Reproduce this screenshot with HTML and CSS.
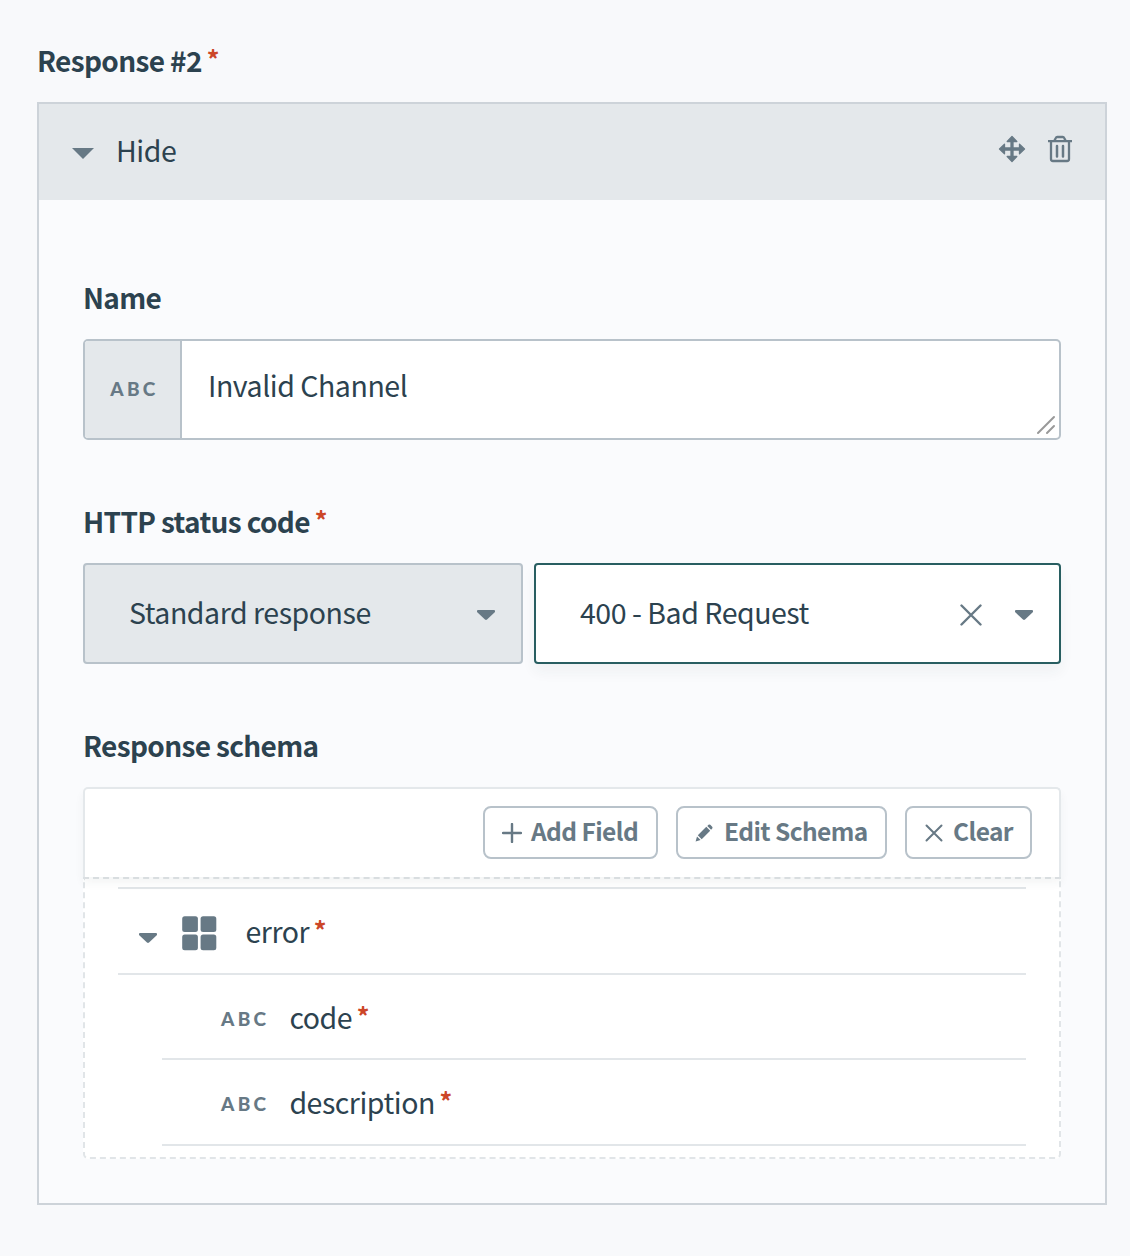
FILE: index.html
```html
<!DOCTYPE html>
<html lang="en">
<head>
<meta charset="utf-8">
<title>Response #2</title>
<link rel="stylesheet" href="styles.css">
</head>
<body>
<main class="page">
  <h2 class="label">Response #2<span class="required">*</span></h2>
  <section class="card">
    <header class="card-header">
      <svg class="toggle" width="22" height="11" viewBox="0 0 22 11"><path d="M0 0h22L11 11z"/></svg>
      <span class="text header-text">Hide</span>
      <div class="header-actions">
        <svg width="28" height="28" viewBox="0 0 28 28"><path d="M14 1.500l4.800 5H15v6.500h6.500V9.200l5 4.800-5 4.800V15H15v6.500h3.800l-4.800 5-4.800-5H13V15H6.500v3.800l-5-4.800 5-4.800V13H13V6.500H9.200z" class="move"/></svg>
        <svg width="24" height="28" viewBox="0 0 24 28" class="line trash"><path d="M0 6.100h24M6.500 5.500l1.300-2.600Q8.200 2 9.300 2h5.400q1.100 0 1.500.9l1.300 2.600M3 6v18q0 2 2 2h14q2 0 2-2V6"/><path class="slats" d="M9 11v10.500M15 11v10.500"/></svg>
      </div>
    </header>
    <div class="card-body">
      <div class="field">
        <h3 class="label">Name</h3>
        <div class="input">
          <span class="type-box"><span class="abc">ABC</span></span>
          <span class="text input-text">Invalid Channel</span>
          <svg class="grip" width="20" height="20" viewBox="0 0 20 20"><path d="M2 18L18 2M11 18l7-7"/></svg>
        </div>
      </div>
      <div class="field">
        <h3 class="label">HTTP status code<span class="required">*</span></h3>
        <div class="selects">
          <div class="select select-muted">
            <span class="text">Standard response</span>
            <svg class="caret" width="18" height="10" viewBox="0 0 18 10"><path d="M1 0h16q1 0 1 1v1l-8 7.500q-1 .8-2 0L0 2V1q0-1 1-1z"/></svg>
          </div>
          <div class="select select-active">
            <span class="text">400 - Bad Request</span>
            <svg class="line clear" width="22" height="22" viewBox="0 0 22 22"><path d="M1.500 1.500l19 19M20.500 1.500l-19 19"/></svg>
            <svg class="caret" width="18" height="10" viewBox="0 0 18 10"><path d="M1 0h16q1 0 1 1v1l-8 7.500q-1 .8-2 0L0 2V1q0-1 1-1z"/></svg>
          </div>
        </div>
      </div>
      <div class="field">
        <h3 class="label">Response schema</h3>
        <div class="schema">
          <div class="toolbar">
            <button class="button add"><svg class="line" width="20" height="20" viewBox="0 0 20 20"><path d="M10 1v18M1 10h18"/></svg><span>Add Field</span></button>
            <button class="button edit"><svg width="18" height="18" viewBox="0 0 18 18"><path d="M.6 17.400l1.400-5 3.600 3.600zM2.800 11.200l8.500-8.400 3.900 3.900-8.500 8.500zM12.300 1.900L13.500.8q.9-.8 1.800 0l1.900 1.900q.8.9 0 1.800l-1.100 1.200z"/></svg><span>Edit Schema</span></button>
            <button class="button reset"><svg class="line" width="18" height="18" viewBox="0 0 18 18"><path d="M1.500 1.500l15 15M16.500 1.500l-15 15"/></svg><span>Clear</span></button>
          </div>
          <div class="tree">
            <div class="row parent">
              <svg class="caret" width="18" height="10" viewBox="0 0 18 10"><path d="M1 0h16q1 0 1 1v1l-8 7.500q-1 .8-2 0L0 2V1q0-1 1-1z"/></svg>
              <svg class="object" width="35" height="35" viewBox="0 0 35 35"><rect x=".2" y=".2" width="15.700" height="15.700" rx="2.500"/><rect x="18.600" y=".2" width="15.700" height="15.700" rx="2.500"/><rect x=".2" y="18.600" width="15.700" height="15.700" rx="2.500"/><rect x="18.600" y="18.600" width="15.700" height="15.700" rx="2.500"/></svg>
              <span class="text">error<span class="required">*</span></span>
            </div>
            <div class="row child"><span class="abc">ABC</span><span class="text">code<span class="required">*</span></span></div>
            <div class="row child last"><span class="abc">ABC</span><span class="text">description<span class="required">*</span></span></div>
          </div>
        </div>
      </div>
    </div>
  </section>
</main>
</body>
</html>
```
FILE: styles.css
```css
* { box-sizing: border-box; }
body {
  margin: 0;
  background: #f8f9fb;
  color: #2c424f;
  font-family: "Noto Sans CJK SC", "Noto Sans", sans-serif;
  font-size: 28.5px;
}
svg { display: block; flex: none; fill: #677985; }
.line { fill: none; stroke: #677985; stroke-width: 2.4; stroke-linecap: round; stroke-linejoin: round; }
.page { min-height: 1256px; padding: 40px 23px 51px 37px; }
.label { margin: 0 0 22px; height: 40px; font-size: 28px; font-weight: 700; line-height: 40px; letter-spacing: -.65px; white-space: nowrap; }
.text { height: 40px; line-height: 40px; letter-spacing: -.46px; white-space: nowrap; }
.required { position: relative; top: -3px; margin-left: 5px; color: #cc4628; font-size: 25px; font-weight: 700; line-height: 1; }
.text .required { margin-left: 4.5px; }
.card { height: 1103px; border: 2px solid #cdd3d9; background: #fafbfd; }
.card-header { display: flex; align-items: center; height: 96px; padding: 0 33px; background: #e4e8eb; }
.toggle { margin-top: 3px; }
.header-text { margin: 0 0 5px 22px; }
.header-actions { display: flex; gap: 22px; margin: 0 0 6px auto; }
.move { stroke: #677985; stroke-width: 1.3; stroke-linejoin: round; }
.trash { stroke-width: 2.3; stroke-linecap: butt; }
.slats { stroke-width: 2.5; stroke-linecap: round; }
.card-body { display: flex; flex-direction: column; gap: 61px; padding: 77px 44px 44px; }
.input { display: flex; height: 101px; border: 2px solid #b8c2ca; border-radius: 5px; background: #fff; overflow: hidden; }
.type-box { display: flex; align-items: center; justify-content: center; width: 97px; padding-left: 4px; border-right: 2px solid #b8c2ca; background: #e4e8eb; }
.abc { color: #677985; font: 900 19px/24px Lato, sans-serif; letter-spacing: 3.3px; }
.type-box .abc { margin-bottom: 1px; }
.input-text { margin: 24px 0 0 26px; }
.grip { align-self: flex-end; margin: 0 3px 3px auto; fill: none; stroke: #999; stroke-width: 2; stroke-linecap: round; }
.selects { display: grid; grid-template-columns: 440px 527px; gap: 11px; height: 101px; }
.select { display: flex; align-items: center; border: 2px solid #b8c2ca; border-radius: 4px; padding: 0 26px 0 44px; }
.select .text { margin-bottom: 3px; }
.select .caret { margin-top: 2px; }
.select-muted { background: #e4e8eb; }
.select-muted .caret { margin-left: auto; }
.select-active { border-color: #285e61; background: #fff; box-shadow: 0 8px 14px rgba(40, 60, 60, .05); }
.clear { margin: 2px 33px 0 auto; }
.schema { height: 372px; }
.toolbar {
  position: relative;
  display: flex;
  justify-content: flex-end;
  height: 90px;
  padding: 17px 27px 0;
  gap: 18px;
  border: 2px solid #e4e8eb;
  border-bottom: 0;
  border-radius: 5px 5px 0 0;
  background: #fff;
  box-shadow: 0 6px 10px rgba(40, 60, 60, .05);
}
.button { display: flex; align-items: center; height: 53px; padding: 0 0 0 17px; border: 2px solid #b8c2ca; border-radius: 8px; background: #fff; color: #677985; font: 700 24.5px/40px "Noto Sans CJK SC", sans-serif; letter-spacing: -.58px; white-space: nowrap; }
.button span { margin-bottom: 3px; }
.button svg { margin-top: 1px; }
.add { width: 175px; gap: 9px; }
.edit { width: 211px; gap: 11px; }
.reset { width: 127px; gap: 10px; padding-left: 18px; }
.reset .line { stroke-width: 2; }
.tree { height: 282px; padding: 8px 33px 0; border: 2px dashed #e1e5e8; border-radius: 0 0 5px 5px; background: #fff; }
.row { display: flex; align-items: center; border-bottom: 2px solid #e2e6e9; }
.parent { height: 88px; border-top: 2px solid #e2e6e9; padding-left: 21px; }
.parent .caret { margin-top: 13px; }
.parent .text { margin-bottom: 1px; }
.object { margin: 4px 28.5px 0 25px; }
.child { height: 85px; margin-left: 44px; padding-left: 59px; }
.child .text { margin-top: 1px; }
.child .abc { margin-right: 20px; margin-top: 5px; }
.last { height: 86px; }
.last .text { margin-top: 0; }
.last .abc { margin-top: 4px; }
```
